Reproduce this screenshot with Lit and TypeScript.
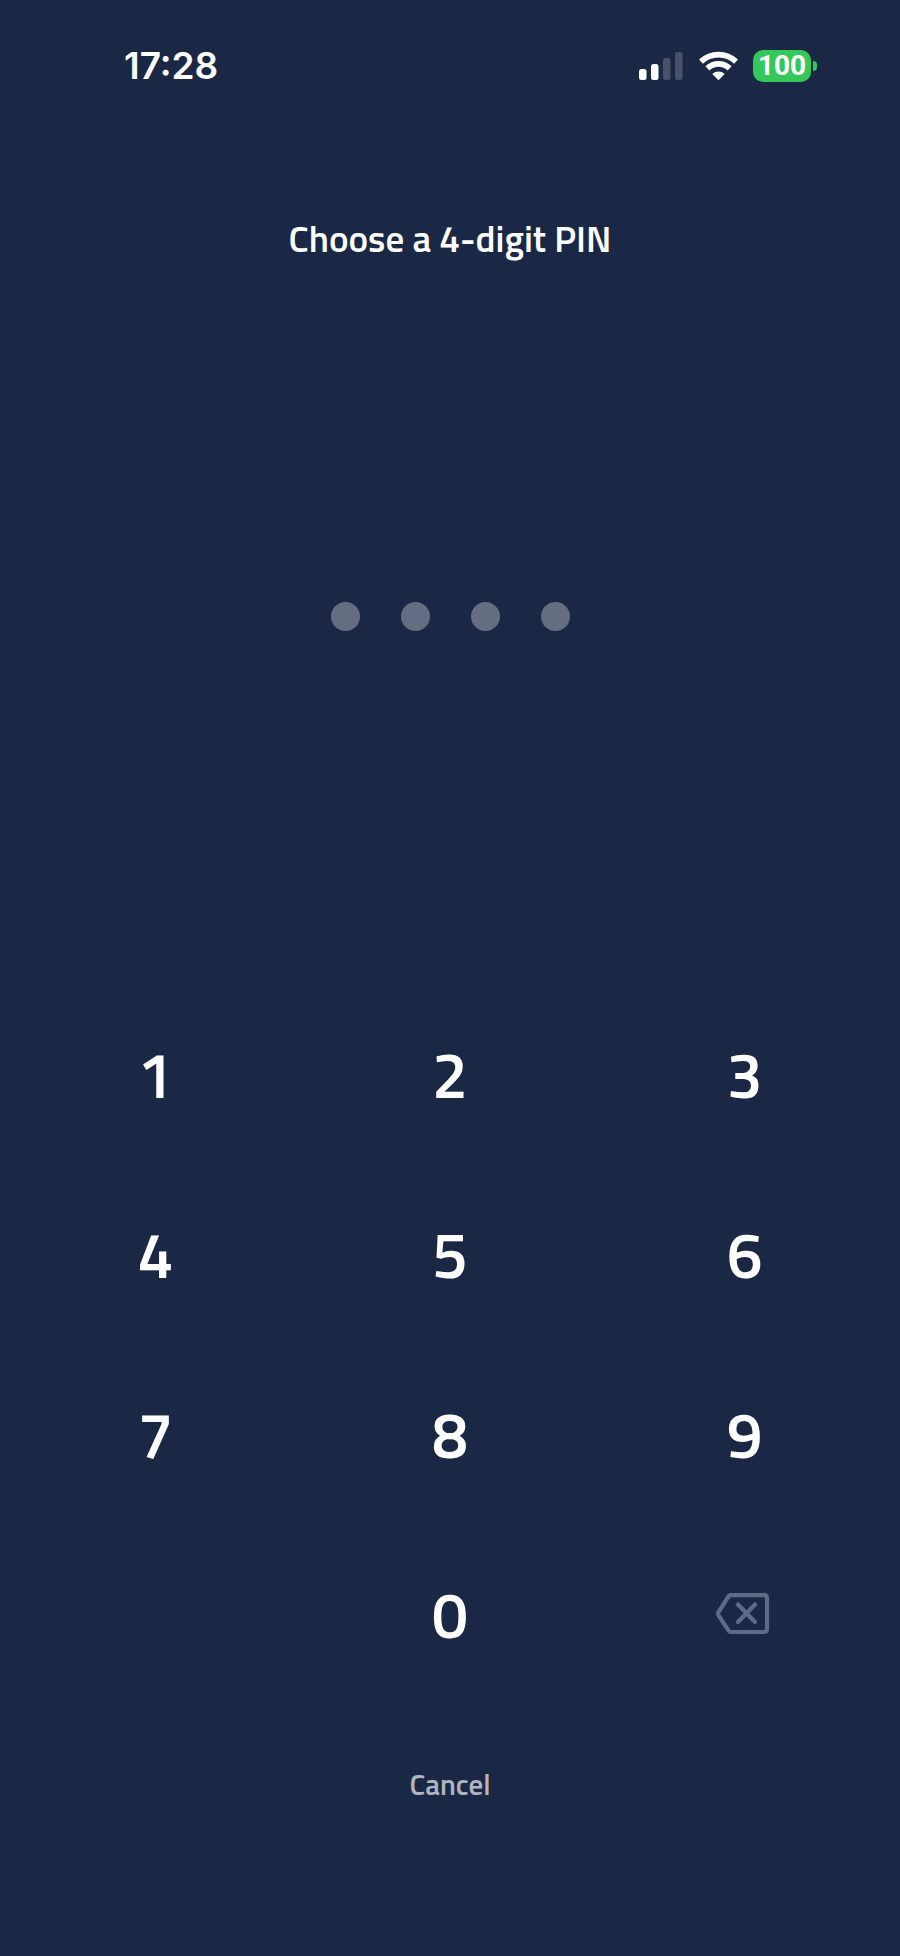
import { LitElement, html, css } from "lit";
import { customElement, state } from "lit/decorators.js";

const PIN_LENGTH = 4;

@customElement("status-bar")
class StatusBar extends LitElement {
  static styles = css`
    :host {
      display: flex;
      align-items: center;
      justify-content: space-between;
      height: 32px;
      padding: 50px 83px 0 124px;
      color: #fff;
      font-family: Inter, "Liberation Sans", sans-serif;
    }
    .time {
      font-size: 37px;
      line-height: 34px;
      font-weight: 600;
    }
    .icons {
      display: flex;
      align-items: center;
      gap: 15px;
    }
    svg {
      display: block;
    }
    .battery {
      display: flex;
      align-items: center;
      gap: 2px;
    }
    .level {
      width: 58px;
      border-radius: 10px;
      background: #34c759;
      font-family: Roboto, sans-serif;
      font-size: 28px;
      line-height: 32px;
      font-weight: 700;
      text-align: center;
    }
    .nub {
      width: 4px;
      height: 10px;
      border-radius: 0 4px 4px 0;
      background: #34c759;
    }
  `;

  render() {
    return html`
      <span class="time">17:28</span>
      <div class="icons">
        <svg width="45" height="30" viewBox="0 0 45 30" fill="#fff" role="img" aria-label="Signal">
          <rect x="0" y="18" width="7.500" height="11" rx="2.500" />
          <rect x="12" y="13" width="7.500" height="16" rx="2.500" />
          <rect x="24" y="7" width="7.500" height="22" rx="2.500" fill="#485169" />
          <rect x="36" y="1" width="7.500" height="28" rx="2.500" fill="#485169" />
        </svg>
        <svg width="39" height="30" viewBox="0 0 39 30" role="img" aria-label="Wi-Fi">
          <g fill="none" stroke="#fff" stroke-width="5.800">
            <path d="M1.900 10.600 A25.500 25.500 0 0 1 37.100 10.600" />
            <path d="M8.400 17.300 A16 16 0 0 1 30.600 17.300" />
          </g>
          <path d="M19.500 29.200 L13.300 22.900 A9.500 9.500 0 0 1 25.700 22.900 Z" fill="#fff" />
        </svg>
        <div class="battery">
          <span class="level">100</span>
          <span class="nub"></span>
        </div>
      </div>
    `;
  }
}

@customElement("pin-dots")
class PinDots extends LitElement {
  static properties = { filled: { type: Number } };
  declare filled: number;

  static styles = css`
    :host {
      display: flex;
      justify-content: center;
      gap: 41px;
    }
    .dot {
      width: 29px;
      height: 29px;
      border-radius: 50%;
      background: #646d81;
    }
    .on {
      background: #fff;
    }
  `;

  render() {
    return Array.from(
      { length: PIN_LENGTH },
      (_, i) => html`<span class="dot ${i < this.filled ? "on" : ""}"></span>`
    );
  }
}

@customElement("app-root")
class AppRoot extends LitElement {
  @state() private pin = "";

  static styles = css`
    :host {
      display: flex;
      flex-direction: column;
      box-sizing: border-box;
      min-height: 100vh;
      padding-bottom: 132px;
      background: #1b2845;
      color: #fff;
      font-family: "Titillium Web", "Noto Sans", sans-serif;
    }
    h1 {
      margin: 132px 0 0;
      font-size: 37px;
      line-height: 48px;
      font-weight: 600;
      text-align: center;
    }
    .entry {
      flex: 1;
      display: flex;
      align-items: center;
      justify-content: center;
      padding-bottom: 16px;
    }
    button {
      border: 0;
      padding: 0;
      background: none;
      color: inherit;
      font-family: inherit;
      cursor: pointer;
    }
    .keypad {
      display: grid;
      grid-template-columns: repeat(3, 1fr);
      grid-auto-rows: 180px;
      padding: 0 8px;
    }
    .key {
      display: flex;
      align-items: center;
      justify-content: center;
      padding-bottom: 5px;
      font-size: 64px;
      line-height: 72px;
      font-weight: 600;
    }
    .zero {
      grid-column: 2;
    }
    .cancel {
      align-self: center;
      margin-top: 38px;
      padding: 0 32px;
      color: #b0b5c0;
      font-size: 29px;
      line-height: 80px;
      font-weight: 600;
    }
  `;

  private press(digit: number) {
    if (this.pin.length < PIN_LENGTH) this.pin += digit;
  }

  private key(digit: number) {
    return html`<button class="key ${digit === 0 ? "zero" : ""}" @click=${() => this.press(digit)}>${digit}</button>`;
  }

  render() {
    return html`
      <status-bar></status-bar>
      <h1>Choose a 4-digit PIN</h1>
      <div class="entry"><pin-dots .filled=${this.pin.length}></pin-dots></div>
      <div class="keypad">
        ${[1, 2, 3, 4, 5, 6, 7, 8, 9, 0].map((d) => this.key(d))}
        <button class="key" aria-label="Delete" @click=${() => (this.pin = this.pin.slice(0, -1))}>
          <svg width="60" height="42" viewBox="0 0 60 42" fill="none" stroke="#5f6b84" stroke-width="4.200" stroke-linecap="round" stroke-linejoin="round">
            <path d="M16 2.100 H49 Q52 2.100 52 5.100 V36 Q52 39 49 39 H16 Q14.500 39 13.500 37.600 L3.600 22.300 Q2.500 20.500 3.600 18.800 L13.500 3.500 Q14.500 2.100 16 2.100 Z" />
            <path d="M23 11.500 L40 29 M40 11.500 L23 29" />
          </svg>
        </button>
      </div>
      <button class="cancel" @click=${() => (this.pin = "")}>Cancel</button>
    `;
  }
}
